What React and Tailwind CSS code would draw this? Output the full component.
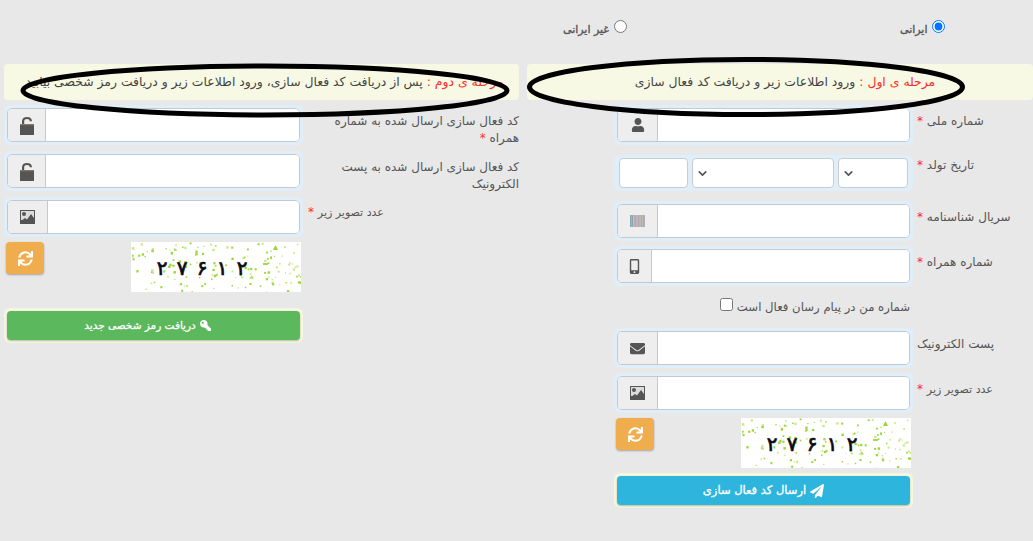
import React from "react";
import { FaUser, FaEnvelope, FaMobileAlt, FaSync, FaPaperPlane, FaKey } from "react-icons/fa";
import { ChevronDown } from "lucide-react";

const FONT = "font-['DejaVu_Sans','Noto_Sans',sans-serif]";

function makeDots() {
  let s = 12345;
  const r = () => ((s = (s * 1103515245 + 12345) & 0x7fffffff) / 0x7fffffff);
  const out = [];
  for (let i = 0; i < 150; i++) {
    out.push({ x: r() * 170, y: r() * 50, w: 1 + r() * 1.5 });
  }
  return out;
}
const DOTS = makeDots();
const DIGITS = [["۲", 31], ["۷", 51], ["۶", 71], ["۱", 91], ["۲", 111]];

function Captcha() {
  return (
    <svg width="170" height="50" viewBox="0 0 170 50" className="block bg-white">
      {DOTS.map((d, i) => (
        <rect key={i} x={d.x} y={d.y} width={d.w} height={d.w} fill={i % 3 === 0 ? "#c8ea8c" : "#9ed63a"} />
      ))}
      <polygon points="142,8 147,8 144.5,3" fill="#9ed13a" />
      <rect x="132" y="21" width="5" height="2" fill="#a9d84e" />
      {DIGITS.map(([t, x], i) => (
        <text key={i} x={x} y="33" textAnchor="middle" fontSize="20" stroke="#0a0a14" strokeWidth="0.7" fill="#0a0a14" fontFamily="DejaVu Sans">
          {t}
        </text>
      ))}
    </svg>
  );
}

function Barcode() {
  const bars = ["#8aa", "#c9a", "#79b", "#bbb", "#a98", "#89c", "#c99", "#9a9", "#88a", "#bb9", "#79a", "#caa", "#8ab", "#aaa"];
  return (
    <svg width="15" height="12" viewBox="0 0 15 12">
      {bars.map((c, i) => (
        <rect key={i} x={i * 1.07} y="0" width="1" height="12" fill={c} />
      ))}
    </svg>
  );
}

function OpenLock() {
  return (
    <svg width="14" height="19" viewBox="0 0 14 19" fill="#555555">
      <rect x="0" y="8" width="14" height="11" />
      <rect x="0" y="8" width="14" height="1.2" fill="#8a7760" />
      <path d="M2 8V5.2C2 2.6 4 1 7 1s5 1.6 5 4.2h-2.2C9.8 3.9 8.7 3 7 3S4.2 3.9 4.2 5.2V8z" />
    </svg>
  );
}

function Picture() {
  return (
    <svg width="15" height="14" viewBox="0 0 15 14">
      <rect width="15" height="14" fill="#555555" />
      <rect x="1" y="1" width="13" height="9" fill="#dcdcdc" />
      <circle cx="4" cy="4" r="2" fill="#555555" />
      <path d="M1 11l4-3 2 1.5L11 4l3 4v5H1z" fill="#555555" />
    </svg>
  );
}

function Halo({ children, className }) {
  return <div className={`rounded-[6px] bg-[#e0eefa] p-[3px] ${className}`}>{children}</div>;
}

function InputBox({ icon, addon }) {
  return (
    <div className="flex h-[34px] overflow-hidden rounded-[5px] border border-[#c3c9cf] bg-white">
      <div className={`flex items-center justify-center border-r border-[#c8c8c8] bg-[#eeeeee] text-[#555555] ${addon}`}>{icon}</div>
      <input className="min-w-0 flex-1 bg-white outline-none" />
    </div>
  );
}

function Star() {
  return <span className="text-[#ff2a2a]"> *</span>;
}

function Label({ children, className }) {
  return (
    <div dir="rtl" className={`text-[12px] leading-[17px] text-[#555555] ${className}`}>
      {children}
    </div>
  );
}

function Field({ icon, addon, children, className, labelClass }) {
  return (
    <div className={`flex h-[40px] ${className}`}>
      <Halo className="h-[40px] w-[299px] shrink-0">
        <InputBox icon={icon} addon={addon} />
      </Halo>
      <Label className={labelClass}>{children}</Label>
    </div>
  );
}

function Banner({ title, text, className }) {
  return (
    <div dir="rtl" className={`flex h-[36px] items-center justify-center rounded-[4px] bg-[#f8f9e4] text-[12.4px] text-[#444444] ${className}`}>
      <span>
        <span className="text-[#ff2a2a]">{title} : </span>
        {text}
      </span>
    </div>
  );
}

function SmallDate({ className, chevron }) {
  return (
    <div className={`flex h-[30px] items-center rounded-[4px] border border-[#c8ccd0] bg-white pl-[3px] text-[#555555] ${className}`}>
      {chevron && <ChevronDown size={13} strokeWidth={3} />}
    </div>
  );
}

function Refresh() {
  return (
    <button className="flex h-[32px] w-[38px] items-center justify-center rounded-[4px] bg-[#f0ad4e] text-white shadow-[0_1px_2px_rgba(0,0,0,0.3)]">
      <FaSync size={15} />
    </button>
  );
}

function ActionButton({ icon, label, color }) {
  return (
    <div className="rounded-[6px] bg-[#f6f7df] p-[3px]">
      <button dir="rtl" className={`flex h-[29px] w-full items-center justify-center gap-[4px] rounded-[4px] text-white [-webkit-text-stroke:0.3px_white] shadow-[0_1px_2px_rgba(0,0,0,0.25)] ${color}`}>
        {icon}
        <span>{label}</span>
      </button>
    </div>
  );
}

export default function App() {
  return (
    <div className={`relative h-[541px] w-[1033px] overflow-hidden bg-[#e8e8e8] ${FONT}`}>
      <div className="flex h-[64px] pl-[563px] pt-[20px] text-[11px] text-[#555555] [-webkit-text-stroke:0.35px_#555555]">
        <div className="flex w-[337px] items-start gap-[5px]">
          <span dir="rtl" className="pt-[2px]">غیر ایرانی</span>
          <input type="radio" name="nat" className="m-0 h-[13px] w-[13px]" />
        </div>
        <div className="flex items-start gap-[5px]">
          <span dir="rtl" className="pt-[2px]">ایرانی</span>
          <input type="radio" name="nat" defaultChecked className="m-0 h-[13px] w-[13px]" />
        </div>
      </div>

      <div className="flex">
        <div className="ml-[4px] w-[515px] shrink-0">
          <Banner title="مرحله ی دوم" text="پس از دریافت کد فعال سازی، ورود اطلاعات زیر و دریافت رمز شخصی بیابید" className="pl-[6px]" />
          <Field className="mt-[5px]" addon="w-[38px]" icon={<OpenLock />} labelClass="ml-auto w-[190px] pt-[8px]">
            کد فعال سازی ارسال شده به شماره همراه<Star />
          </Field>
          <Field className="mt-[6px]" addon="w-[38px]" icon={<OpenLock />} labelClass="ml-auto w-[190px] pt-[8px]">
            کد فعال سازی ارسال شده به پست الکترونیک
          </Field>
          <Field className="mt-[6px]" addon="w-[40px]" icon={<Picture />} labelClass="ml-[5px] pt-[7px]">
            <span className="text-[11px]">عدد تصویر زیر</span><Star />
          </Field>
          <div className="mt-[5px] flex w-[297px] justify-between pl-[2px]">
            <Refresh />
            <Captcha />
          </div>
          <div className="mt-[16px] w-[299px] text-[10.5px]">
            <ActionButton color="bg-[#5cb85c] pr-[12px]" icon={<FaKey size={11} className="-scale-x-100" />} label="دریافت رمز شخصی جدید" />
          </div>
        </div>

        <div className="ml-[8px] w-[506px] shrink-0">
          <Banner title="مرحله ی اول" text="ورود اطلاعات زیر و دریافت کد فعال سازی" className="pl-[10px]" />
          <div className="pl-[87px]">
            <Field className="mt-[5px]" addon="w-[40px]" icon={<FaUser size={14} />} labelClass="ml-[4px] pt-[8px]">
              شماره ملی<Star />
            </Field>
            <div className="mt-[10px] flex">
              <Halo className="flex h-[36px] w-[299px] shrink-0 gap-[4px] px-[5px]">
                <SmallDate className="w-[69px]" />
                <SmallDate className="w-[142px]" chevron />
                <SmallDate className="w-[70px]" chevron />
              </Halo>
              <Label className="ml-[4px] pt-[2px]">تاریخ تولد<Star /></Label>
            </div>
            <Field className="mt-[10px]" addon="w-[40px]" icon={<Barcode />} labelClass="ml-[4px] pt-[8px]">
              سریال شناسنامه<Star />
            </Field>
            <Field className="mt-[5px]" addon="w-[34px]" icon={<FaMobileAlt size={15} />} labelClass="ml-[4px] pt-[8px]">
              شماره همراه<Star />
            </Field>
            <div className="mt-[12px] flex h-[30px] w-[296px] items-start justify-end gap-[4px]">
              <input type="checkbox" className="m-0 h-[13px] w-[13px]" />
              <div dir="rtl" className="pt-[1px] text-[11.7px] leading-[17px] text-[#555555]">شماره من در پیام رسان فعال است</div>
            </div>
            <Field className="" addon="w-[40px]" icon={<FaEnvelope size={15} />} labelClass="ml-[4px] pt-[8px]">
              پست الکترونیک
            </Field>
            <Field className="mt-[5px]" addon="w-[40px]" icon={<Picture />} labelClass="ml-[4px] pt-[8px]">
              <span className="text-[11px]">عدد تصویر زیر</span><Star />
            </Field>
            <div className="mt-[5px] flex w-[297px] justify-between pl-[2px]">
              <Refresh />
              <Captcha />
            </div>
            <div className="mt-[5px] w-[299px] text-[11.5px]">
              <ActionButton color="bg-[#2db5dd]" icon={<FaPaperPlane size={14} />} label="ارسال کد فعال سازی" />
            </div>
          </div>
        </div>
      </div>

      <svg width="1033" height="541" viewBox="0 0 1033 541" className="pointer-events-none absolute left-0 top-0">
        <ellipse cx="746" cy="87" rx="216.5" ry="27.5" fill="none" stroke="#000" strokeWidth="5" />
        <ellipse cx="265" cy="90.5" rx="242" ry="24.5" fill="none" stroke="#000" strokeWidth="5" />
      </svg>
    </div>
  );
}
